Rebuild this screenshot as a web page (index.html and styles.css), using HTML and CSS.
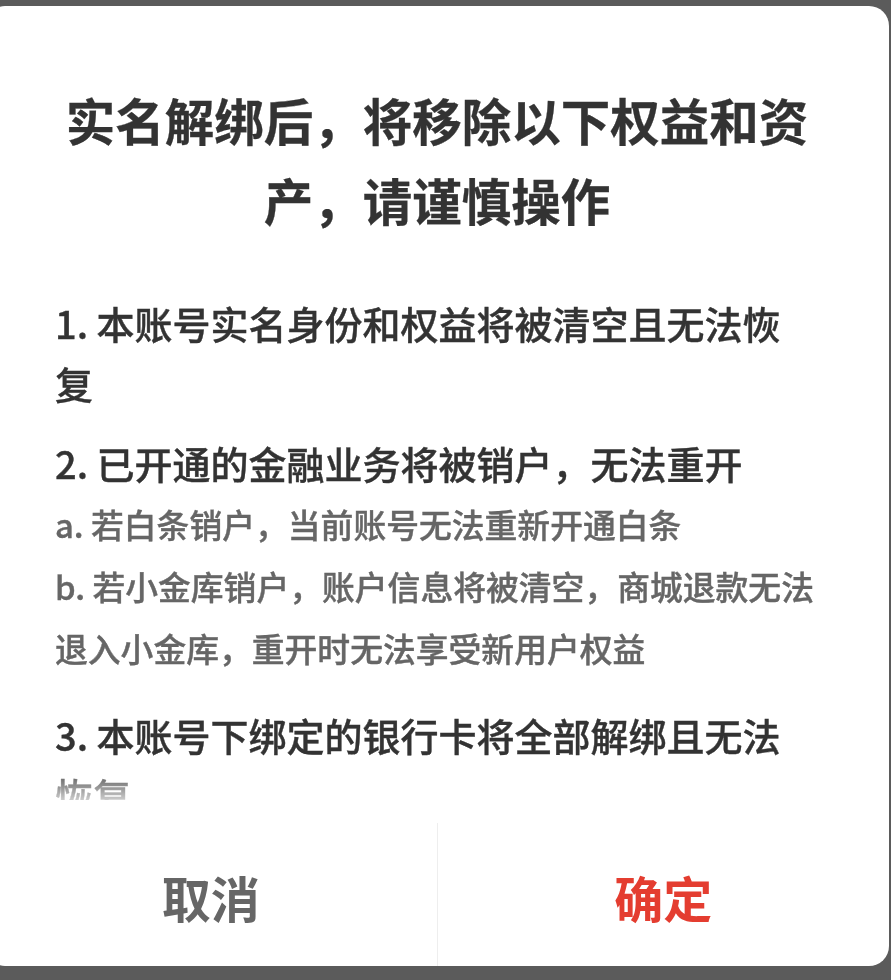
FILE: index.html
```html
<!DOCTYPE html>
<html lang="zh-CN">
<head>
<meta charset="utf-8">
<title>实名解绑</title>
<link rel="stylesheet" href="styles.css">
</head>
<body>
<div class="dialog">
  <h1 class="title">实名解绑后，将移除以下权益和资产，请谨慎操作</h1>
  <div class="content">
    <div class="item">1. 本账号实名身份和权益将被清空且无法恢复</div>
    <div class="item">2. 已开通的金融业务将被销户，无法重开</div>
    <div class="sub">a. 若白条销户，当前账号无法重新开通白条</div>
    <div class="sub">b. 若小金库销户，账户信息将被清空，商城退款无法退入小金库，重开时无法享受新用户权益</div>
    <div class="item item-gap">3. 本账号下绑定的银行卡将全部解绑且无法恢复</div>
  </div>
  <div class="actions">
    <div class="btn btn-cancel">取消</div>
    <div class="btn btn-ok">确定</div>
  </div>
</div>
</body>
</html>
```
FILE: styles.css
```css
html, body {
  margin: 0;
  padding: 0;
  background: #5b5b5b;
  overflow: hidden;
  height: 980px;
}
body {
  font-family: "Noto Sans CJK SC", "Noto Sans", sans-serif;
}
.dialog {
  margin-top: 6px;
  margin-left: -15px;
  width: 904px;
  height: 960px;
  background: #fff;
  border-radius: 20px;
  display: flex;
  flex-direction: column;
  box-sizing: border-box;
}
.title {
  margin: 0;
  padding: 74px 70px 0;
  font-size: 49.5px;
  line-height: 80px;
  font-weight: 700;
  color: #333;
  text-align: center;
  -webkit-text-stroke: 0.3px #333;
}
.content {
  margin-top: 53px;
  height: 507px;
  padding: 0 73px 0 70px;
  overflow: hidden;
  -webkit-mask-image: linear-gradient(to bottom, #000 calc(100% - 36px), rgba(0,0,0,0.25));
  mask-image: linear-gradient(to bottom, #000 calc(100% - 36px), rgba(0,0,0,0.25));
}
.item {
  font-size: 38px;
  line-height: 60px;
  font-weight: 500;
  color: #333;
  -webkit-text-stroke: 0.4px #333;
}
.item + .item {
  margin-top: 20px;
}
.item-gap {
  margin-top: 26px;
}
.sub {
  font-size: 32.8px;
  line-height: 62px;
  font-weight: 500;
  color: #666;
  -webkit-text-stroke: 0.4px #666;
}
.actions {
  margin-top: 23px;
  height: 143px;
  display: flex;
}
.btn {
  flex: 1;
  display: flex;
  align-items: center;
  justify-content: center;
  font-size: 49px;
  font-weight: 700;
  padding-top: 4px;
}
.btn-cancel {
  color: #666;
}
.btn-ok {
  color: #e43d30;
  border-left: 1px solid #eeeeee;
}
```
